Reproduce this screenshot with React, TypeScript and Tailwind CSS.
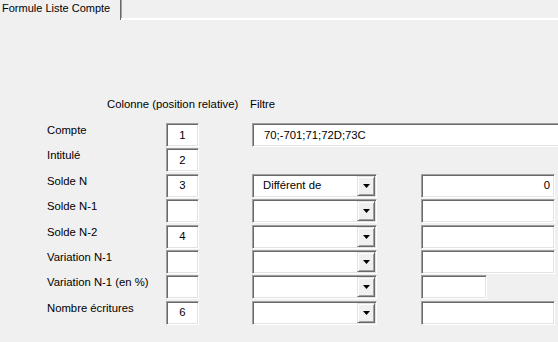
const sunken =
  "border border-t-[#a0a0a0] border-l-[#a0a0a0] border-r-white border-b-white shadow-[inset_1px_1px_0_#696969,inset_-1px_-1px_0_#e3e3e3] bg-white";

type Row = {
  label: string;
  col?: string;
  kind: "text" | "none" | "combo";
  op?: string;
  value?: string;
  short?: boolean;
};

const rows: Row[] = [
  { label: "Compte", col: "1", kind: "text" },
  { label: "Intitulé", col: "2", kind: "none" },
  { label: "Solde N", col: "3", kind: "combo", op: "Différent de", value: "0" },
  { label: "Solde N-1", kind: "combo" },
  { label: "Solde N-2", col: "4", kind: "combo" },
  { label: "Variation N-1", kind: "combo" },
  { label: "Variation N-1 (en %)", kind: "combo", short: true },
  { label: "Nombre écritures", col: "6", kind: "combo" },
];

function Arrow() {
  return (
    <svg width="7" height="4" viewBox="0 0 7 4">
      <polygon points="0,0 7,0 3.5,4" fill="#000" />
    </svg>
  );
}

function Combo({ text }: { text?: string }) {
  return (
    <div className={`${sunken} w-[125px] h-[24px] p-[1px] flex`}>
      <div className="flex-1 pl-[9px] flex items-center">{text}</div>
      <div className="w-[18px] h-full bg-[#f0f0f0] border border-t-[#e3e3e3] border-l-[#e3e3e3] border-r-[#696969] border-b-[#696969] shadow-[inset_1px_1px_0_#fff,inset_-1px_-1px_0_#a0a0a0] flex items-center justify-center">
        <Arrow />
      </div>
    </div>
  );
}

export default function App() {
  return (
    <div
      className="w-[558px] h-[342px] bg-[#f0f0f0] overflow-hidden text-[11.3px] leading-[13px] text-black"
      style={{ fontFamily: '"Liberation Sans", Arial, sans-serif' }}
    >
      <div className="flex h-[20px]">
        <div className="w-[121px] border-r border-r-[#696969] shadow-[1px_0_0_#a0a0a0] pl-[2px] pt-[2px] text-[11px]">
          Formule Liste Compte
        </div>
        <div className="flex-1 h-[20px] border-b-2 border-b-white"></div>
      </div>

      <div className="flex pl-[107px] mt-[78px]">
        <span className="w-[143px]">Colonne (position relative)</span>
        <span>Filtre</span>
      </div>

      <div className="flex flex-col gap-[1.4px] pl-[47px] mt-[12px]">
        {rows.map((r) => (
          <div key={r.label} className="flex h-[24px]">
            <div className="w-[119px] shrink-0 pt-[1px]">{r.label}</div>
            <div className={`${sunken} w-[33px] shrink-0 h-[24px] flex items-center justify-center`}>
              {r.col}
            </div>
            {r.kind === "text" && (
              <div className={`${sunken} ml-[53px] w-[320px] shrink-0 h-[24px] flex items-center pl-[11px]`}>
                70;-701;71;72D;73C
              </div>
            )}
            {r.kind === "combo" && (
              <>
                <div className="ml-[53px] shrink-0">
                  <Combo text={r.op} />
                </div>
                <div
                  className={`${sunken} ml-[44px] shrink-0 ${r.short ? "w-[66px]" : "w-[134px]"} h-[24px] flex items-center justify-end pr-[4px]`}
                >
                  {r.value}
                </div>
              </>
            )}
          </div>
        ))}
      </div>
    </div>
  );
}
